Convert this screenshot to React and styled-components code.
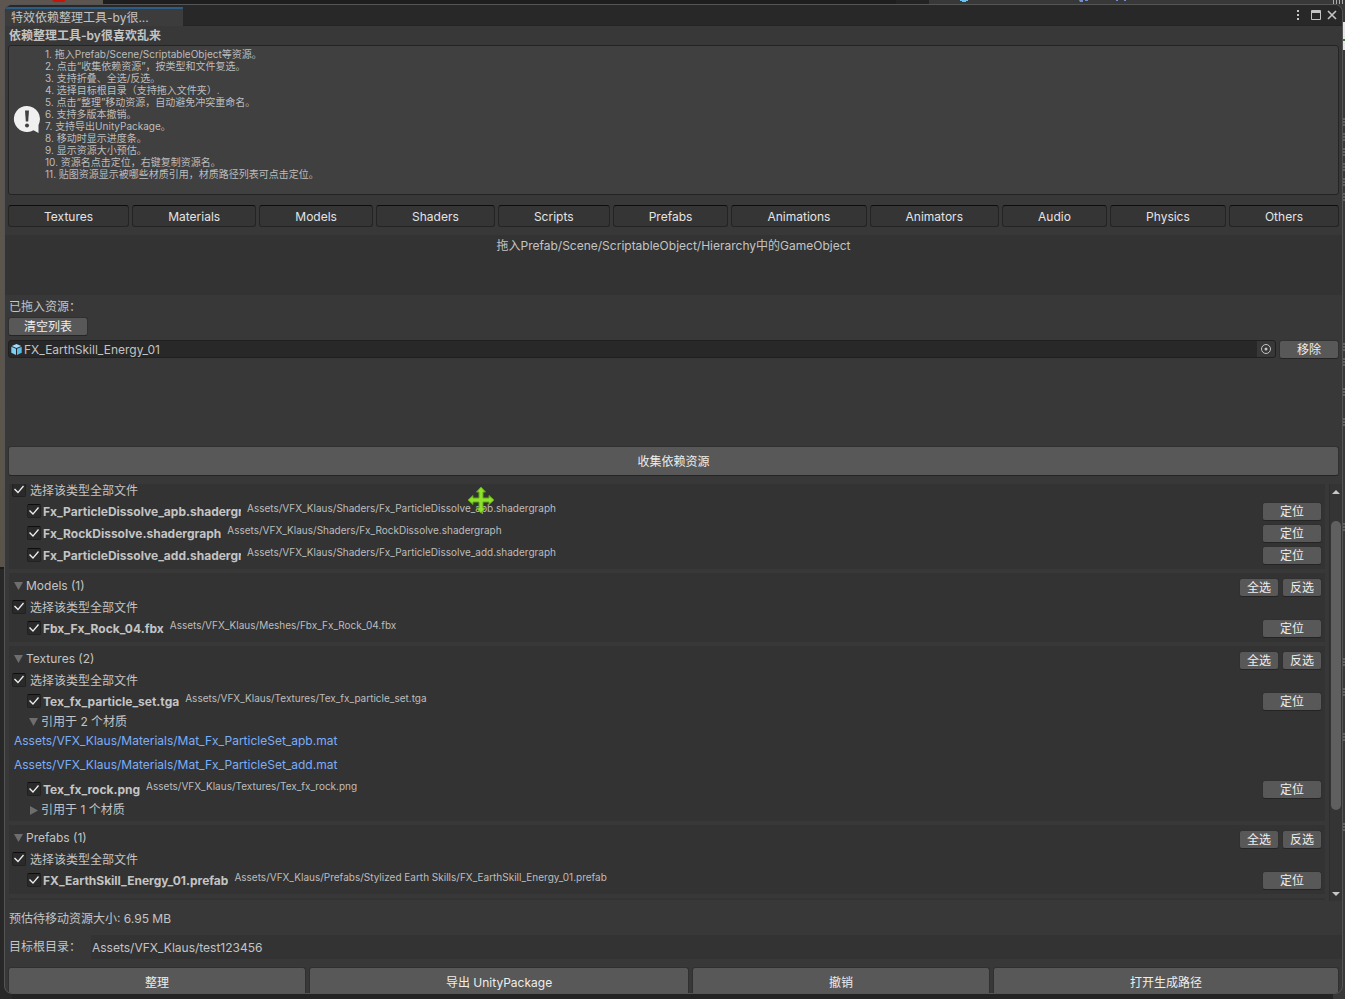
import React from "react";
import styled, { createGlobalStyle, css } from "styled-components";

const GlobalStyle = createGlobalStyle`
  *, *::before, *::after { box-sizing: border-box; }
  body {
    margin: 0;
    background: #282828;
    color: #c4c4c4;
    font: 12px/20px Inter, "Noto Sans CJK SC", sans-serif;
  }
  button, input { font: inherit; color: inherit; }
`;

const Desktop = styled.div`
  position: relative;
  height: 100vh;
  min-height: 800px;
  padding: 4px 2px 5px 4px;
  overflow: hidden;
  background:
    linear-gradient(#5d5650, #5d5650) 0 0 / 103px 20px no-repeat,
    linear-gradient(#383838, #383838) 929px 0 / 100% 8px no-repeat,
    linear-gradient(#1e1e1e, #1e1e1e) 103px 0 / 793px 8px no-repeat,
    linear-gradient(#5d5650, #5a5448 567px, #1c1c1c 567px, #1c1c1c 569px, #282828 569px) 0 0 / 12px 100% no-repeat,
    linear-gradient(#383838, #383838) 100% 0 / 12px 100% no-repeat,
    #232323;
`;

const Backdrop = styled.svg`
  position: absolute;
  top: 0;
  ${(p) => (p.$side === "right" ? "right: 0;" : "left: 0;")}
`;

const Window = styled.main`
  position: relative;
  display: flex;
  flex-direction: column;
  height: 100%;
  overflow: hidden;
  background: #383838;
  border: 1px solid #555;
  border-radius: 8px;
`;

const TitleBar = styled.header`
  flex: none;
  display: flex;
  justify-content: space-between;
  align-items: flex-end;
  height: 21px;
  background: #282828;
  border-bottom: 1px solid #232323;
`;

const WindowTab = styled.div`
  width: 178px;
  height: 19px;
  margin-bottom: -1px;
  padding: 0 6px;
  line-height: 18px;
  background: #3c3c3c;
  border-top: 2px solid #2c5d87;
`;

const WindowControls = styled.div`
  display: flex;
  gap: 3px;
  height: 17px;
  padding-right: 3px;
`;

const IconButton = styled.button`
  display: grid;
  place-items: center;
  width: 14px;
  height: 14px;
  padding: 0;
  border: 0;
  background: none;
  color: #c4c4c4;
`;

const Heading = styled.h1`
  flex: none;
  margin: 0;
  padding-left: 4px;
  font-size: 12px;
  font-weight: 600;
  line-height: 20px;
  height: 19px;
`;

const HelpBox = styled.section`
  flex: none;
  display: flex;
  align-items: center;
  gap: 4px;
  margin: 0 3px;
  padding: 2px 4px 4px;
  background: #404040;
  border: 1px solid #242424;
  border-radius: 3px;
`;

const HelpText = styled.ol`
  margin: 0;
  padding: 0 0 10px;
  list-style: none;
  font-size: 10px;
  line-height: 12px;
  color: #bdbdbd;
`;

const ButtonRow = styled.div`
  flex: none;
  display: flex;
  gap: 3px;
  margin: ${(p) => p.$top}px 3px 0;
`;

const TypeTab = styled.button`
  flex: 1 1 auto;
  height: 22px;
  padding: 2px 0 0;
  line-height: 18px;
  color: #e4e4e4;
  background: #353535;
  border: 1px solid #242424;
  border-top-color: #0d0d0d;
  border-radius: 3px;
`;

const DropZone = styled.section`
  flex: none;
  min-height: 60px;
  margin-top: 8px;
  line-height: 22px;
  text-align: center;
  background: #333;
`;

const Button = styled.button`
  flex: none;
  height: 19px;
  padding: 0;
  line-height: 18px;
  color: #eee;
  background: #585858;
  border: 1px solid #303030;
  border-bottom-color: #242424;
  border-radius: 3px;
  ${(p) => p.$width && css`width: ${p.$width}px;`}
  ${(p) => p.$large && css`flex: 1 1 auto; height: 30px; padding-top: 2px;`}
`;

const Label = styled.div`
  flex: none;
  height: 20px;
  padding-left: 4px;
  margin-top: ${(p) => p.$top}px;
  line-height: 20px;
`;

const DroppedList = styled.div`
  flex: none;
  min-height: 106px;
  margin: 4px 3px 0;
`;

const DroppedRow = styled.div`
  display: flex;
  gap: 3px;
`;

const ObjectField = styled.label`
  flex: 1;
  display: flex;
  align-items: center;
  height: 18px;
  padding-left: 2px;
  background: #282828;
  border: 1px solid #202020;
  border-radius: 3px;
  overflow: hidden;
`;

const ObjectInput = styled.input`
  flex: 1;
  min-width: 0;
  height: 16px;
  padding: 2px 2px 0;
  border: 0;
  outline: 0;
  background: none;
`;

const Picker = styled(IconButton)`
  width: 18px;
  height: 16px;
  background: #373737;
`;

const ScrollArea = styled.div`
  flex: 1;
  min-height: 0;
  display: flex;
  gap: 4px;
  margin: 8px 0 0 4px;
  overflow: hidden;
`;

const Groups = styled.div`
  flex: 1;
  min-width: 0;
  display: flex;
  flex-direction: column;
  gap: 4px;
  margin-top: -4px;
`;

const Group = styled.section`
  flex: none;
  padding-bottom: 2px;
  background: #333;
`;

const GroupHeader = styled.div`
  display: flex;
  align-items: center;
  height: 24px;
  padding: 2px 3px 0 5px;
  gap: 3px;
`;

const GroupButton = styled(Button)`
  align-self: flex-end;
`;

const Foldout = styled.button`
  display: flex;
  align-items: center;
  gap: 3px;
  height: 18px;
  padding: 0;
  margin-left: ${(p) => p.$indent || 0}px;
  margin-right: auto;
  border: 0;
  background: none;
`;

const ToggleRow = styled.label`
  display: flex;
  align-items: center;
  gap: 4px;
  height: 21px;
  padding-left: 3px;
  line-height: 19px;
`;

const Check = styled.input`
  flex: none;
  appearance: none;
  width: 14px;
  height: 14px;
  margin: 0 0 2px;
  background: #2a2a2a;
  border: 1px solid #212121;
  border-top-color: #0d0d0d;
  border-radius: 2px;
  &:checked::before {
    content: "";
    display: block;
    width: 12px;
    height: 12px;
    background: #eee;
    clip-path: polygon(1px 6px, 2px 5px, 5px 8px, 10px 2px, 11px 3px, 5px 10px);
  }
`;

const FileRow = styled.div`
  display: flex;
  align-items: center;
  height: 22px;
  padding: 0 3px 0 18px;
`;

const FileLabel = styled.label`
  display: flex;
  align-items: center;
  gap: 2px;
`;

const FileName = styled.span`
  max-width: 198px;
  overflow: hidden;
  white-space: nowrap;
  font-weight: 700;
`;

const FilePath = styled.span`
  flex: 1;
  align-self: flex-start;
  padding-left: 6px;
  font-size: 10px;
  line-height: 14px;
  color: #bdbdbd;
`;

const LocateButton = styled(Button)`
  margin-bottom: 2px;
`;

const MaterialLink = styled.a`
  display: block;
  height: 24px;
  padding-left: 5px;
  color: #7baefa;
  text-decoration: none;
`;

const ScrollBar = styled.div`
  flex: none;
  display: flex;
  flex-direction: column;
  align-items: center;
  width: 13px;
  padding: 5px 0 4px;
  background: #343434;
  border-left: 1px solid #2e2e2e;
`;

const ScrollTrack = styled.div`
  flex: 1;
  width: 10px;
  padding-top: 26px;
`;

const ScrollThumb = styled.div`
  height: 78%;
  border-radius: 5px;
  background: #5f5f5f;
`;

const TargetRow = styled.label`
  flex: none;
  display: flex;
  align-items: center;
  margin-top: 6px;
  padding-left: 4px;
`;

const TargetCaption = styled.span`
  width: 82px;
`;

const TargetInput = styled.input`
  flex: 1;
  height: 24px;
  padding: 0 1px;
  border: 0;
  outline: 0;
  background: #333;
`;

const Actions = styled(ButtonRow)`
  margin-bottom: -4px;
`;

const MoveCursor = styled.svg`
  position: absolute;
  left: 462px;
  top: 481px;
`;

const helpLines = [
  "拖入Prefab/Scene/ScriptableObject等资源。",
  "点击“收集依赖资源”，按类型和文件复选。",
  "支持折叠、全选/反选。",
  "选择目标根目录（支持拖入文件夹）.",
  "点击“整理”移动资源，自动避免冲突重命名。",
  "支持多版本撤销。",
  "支持导出UnityPackage。",
  "移动时显示进度条。",
  "显示资源大小预估。",
  "资源名点击定位，右键复制资源名。",
  "贴图资源显示被哪些材质引用，材质路径列表可点击定位。",
];

const types = ["Textures", "Materials", "Models", "Shaders", "Scripts", "Prefabs", "Animations", "Animators", "Audio", "Physics", "Others"];

const groups = [
  {
    files: [
      { name: "Fx_ParticleDissolve_apb.shadergraph", dir: "Shaders/" },
      { name: "Fx_RockDissolve.shadergraph", dir: "Shaders/" },
      { name: "Fx_ParticleDissolve_add.shadergraph", dir: "Shaders/" },
    ],
  },
  { title: "Models (1)", files: [{ name: "Fbx_Fx_Rock_04.fbx", dir: "Meshes/" }] },
  {
    title: "Textures (2)",
    files: [
      {
        name: "Tex_fx_particle_set.tga",
        dir: "Textures/",
        uses: 2,
        materials: ["Mat_Fx_ParticleSet_apb.mat", "Mat_Fx_ParticleSet_add.mat"],
      },
      { name: "Tex_fx_rock.png", dir: "Textures/", uses: 1 },
    ],
  },
  { title: "Prefabs (1)", files: [{ name: "FX_EarthSkill_Energy_01.prefab", dir: "Prefabs/Stylized Earth Skills/" }] },
];

const Arrow = ({ open }) => (
  <svg width="9" height="9" viewBox="0 0 9 9" fill="#6e6e6e" aria-hidden="true">
    <path d={open ? "M0 0h9L4.500 8z" : "M1 0v9l8-4.500z"} />
  </svg>
);

const FileEntry = ({ file }) => (
  <>
    <FileRow>
      <FileLabel>
        <Check type="checkbox" defaultChecked />
        <FileName>{file.name}</FileName>
      </FileLabel>
      <FilePath>{"Assets/VFX_Klaus/" + file.dir + file.name}</FilePath>
      <LocateButton $width={60}>定位</LocateButton>
    </FileRow>
    {file.uses && (
      <Foldout $indent={20} aria-expanded={!!file.materials}>
        <Arrow open={!!file.materials} />
        引用于 {file.uses} 个材质
      </Foldout>
    )}
    {file.materials?.map((m) => (
      <MaterialLink key={m} href="#">{"Assets/VFX_Klaus/Materials/" + m}</MaterialLink>
    ))}
  </>
);

export default function App() {
  return (
    <Desktop>
      <GlobalStyle />
      <Backdrop width="1200" height="5" aria-hidden="true">
        <path d="M52 0h14l-2 2H54z" fill="#c4150c" />
        <path d="M960 0h8v1h-2v1h-4V1h-2z" fill="#6cc4ee" />
        <path d="M1079 0h4v2h-3zM1085 0h3v1h-3zM1116 0h2v1h-2zM1124 0h2v1h-2z" fill="#6f8fd0" />
      </Backdrop>
      <Backdrop $side="right" width="12" height="999" aria-hidden="true">
        <path d="M0 0h1v4H0zM3 0h1v4H3zM6 0h1v4H6zM9 0h1v4H9z" fill="#aaa" />
        <path d="M10 22h2v28h-2z" fill="#e4e4e4" />
        <path d="M10 39h2v2h-2z" fill="#3b7a3b" />
        <path
          d="M11 118v8M11 133v8M11 148v8M11 163v8M11 178v8M11 193v8M11 343v8M11 358v8M11 388v8M11 418v8M11 523v8M11 658v8M11 688v8M11 733v8M11 823v8"
          stroke="#8a8a8a"
          strokeDasharray="2 1"
        />
      </Backdrop>
      <Window>
        <TitleBar>
          <WindowTab>特效依赖整理工具-by很...</WindowTab>
          <WindowControls>
            <IconButton aria-label="Menu">
              <svg width="14" height="14" fill="currentColor">
                <path d="M6 2h2v2H6zM6 6h2v2H6zM6 10h2v2H6z" />
              </svg>
            </IconButton>
            <IconButton aria-label="Maximize">
              <svg width="14" height="14" fill="none" stroke="currentColor">
                <path d="M3.500 2.500h9v9h-9zM3 3.500h10M3 4.500h10" />
              </svg>
            </IconButton>
            <IconButton aria-label="Close">
              <svg width="14" height="14" fill="none" stroke="currentColor" strokeWidth="1.600">
                <path d="M3 3l8 8M11 3l-8 8" />
              </svg>
            </IconButton>
          </WindowControls>
        </TitleBar>

        <Heading>依赖整理工具-by很喜欢乱来</Heading>
        <HelpBox>
          <svg width="28" height="28" viewBox="0 0 28 28" aria-hidden="true">
            <path d="M14 1a13 13 0 1 0 6.500 24.200L25.500 28V20A13 13 0 0 0 14 1z" fill="#f0f0f0" />
            <path d="M12 5.500h4l-.8 11h-2.400z" fill="#404040" />
            <circle cx="14" cy="20.500" r="2" fill="#404040" />
          </svg>
          <HelpText>
            {helpLines.map((line, i) => (
              <li key={i}>{i + 1}. {line}</li>
            ))}
          </HelpText>
        </HelpBox>

        <ButtonRow $top={10}>
          {types.map((t) => <TypeTab key={t}>{t}</TypeTab>)}
        </ButtonRow>

        <DropZone>拖入Prefab/Scene/ScriptableObject/Hierarchy中的GameObject</DropZone>

        <Label $top={2}>已拖入资源：</Label>
        <ButtonRow $top={0}>
          <Button $width={80}>清空列表</Button>
        </ButtonRow>
        <DroppedList>
          <DroppedRow>
            <ObjectField>
              <svg width="11" height="11" viewBox="0 0 11 11" aria-hidden="true">
                <path d="M5.500 0l4.700 1.900-4.700 2L.8 1.900z" fill="#a5dcf7" />
                <path d="M.3 2.700L5 4.700V11L.3 8.700z" fill="#7fd0f5" />
                <path d="M10.700 2.700L6 4.700V11l4.700-2.300z" fill="#5bb9e8" />
              </svg>
              <ObjectInput defaultValue="FX_EarthSkill_Energy_01" aria-label="已拖入资源" />
              <Picker aria-label="Pick object">
                <svg width="12" height="12" fill="none" stroke="#c4c4c4">
                  <circle cx="6" cy="6" r="4.500" />
                  <circle cx="6" cy="6" r="1.500" fill="#c4c4c4" stroke="none" />
                </svg>
              </Picker>
            </ObjectField>
            <Button $width={60}>移除</Button>
          </DroppedRow>
        </DroppedList>
        <ButtonRow $top={0}>
          <Button $large>收集依赖资源</Button>
        </ButtonRow>

        <ScrollArea>
          <Groups>
            {groups.map((g, i) => (
              <Group key={i}>
                {g.title && (
                  <GroupHeader>
                    <Foldout aria-expanded>
                      <Arrow open />
                      {g.title}
                    </Foldout>
                    <GroupButton $width={40}>全选</GroupButton>
                    <GroupButton $width={40}>反选</GroupButton>
                  </GroupHeader>
                )}
                <ToggleRow>
                  <Check type="checkbox" defaultChecked />
                  选择该类型全部文件
                </ToggleRow>
                {g.files.map((f) => <FileEntry key={f.name} file={f} />)}
              </Group>
            ))}
            <Group />
          </Groups>
          <ScrollBar aria-hidden="true">
            <svg width="8" height="6" fill="#c8c8c8"><path d="M4 1l4 4H0z" /></svg>
            <ScrollTrack>
              <ScrollThumb />
            </ScrollTrack>
            <svg width="8" height="6" fill="#c8c8c8"><path d="M0 1h8L4 5z" /></svg>
          </ScrollBar>
        </ScrollArea>

        <Label $top={8}>预估待移动资源大小: 6.95 MB</Label>
        <TargetRow>
          <TargetCaption>目标根目录：</TargetCaption>
          <TargetInput defaultValue="Assets/VFX_Klaus/test123456" />
        </TargetRow>
        <Actions $top={8}>
          <Button $large>整理</Button>
          <Button $large>导出 UnityPackage</Button>
          <Button $large>撤销</Button>
          <Button $large>打开生成路径</Button>
        </Actions>

        <MoveCursor width="28" height="28" viewBox="0 0 28 28" aria-hidden="true">
          <path
            d="M14 1l4.500 5H16v6h6V9.500l5 4.500-5 4.500V16h-6v6h2.500L14 27l-4.500-5H12v-6H6v2.500L1 14l5-4.500V12h6V6H9.500z"
            fill="#8fe02e"
            stroke="#5fa812"
          />
        </MoveCursor>
      </Window>
    </Desktop>
  );
}
